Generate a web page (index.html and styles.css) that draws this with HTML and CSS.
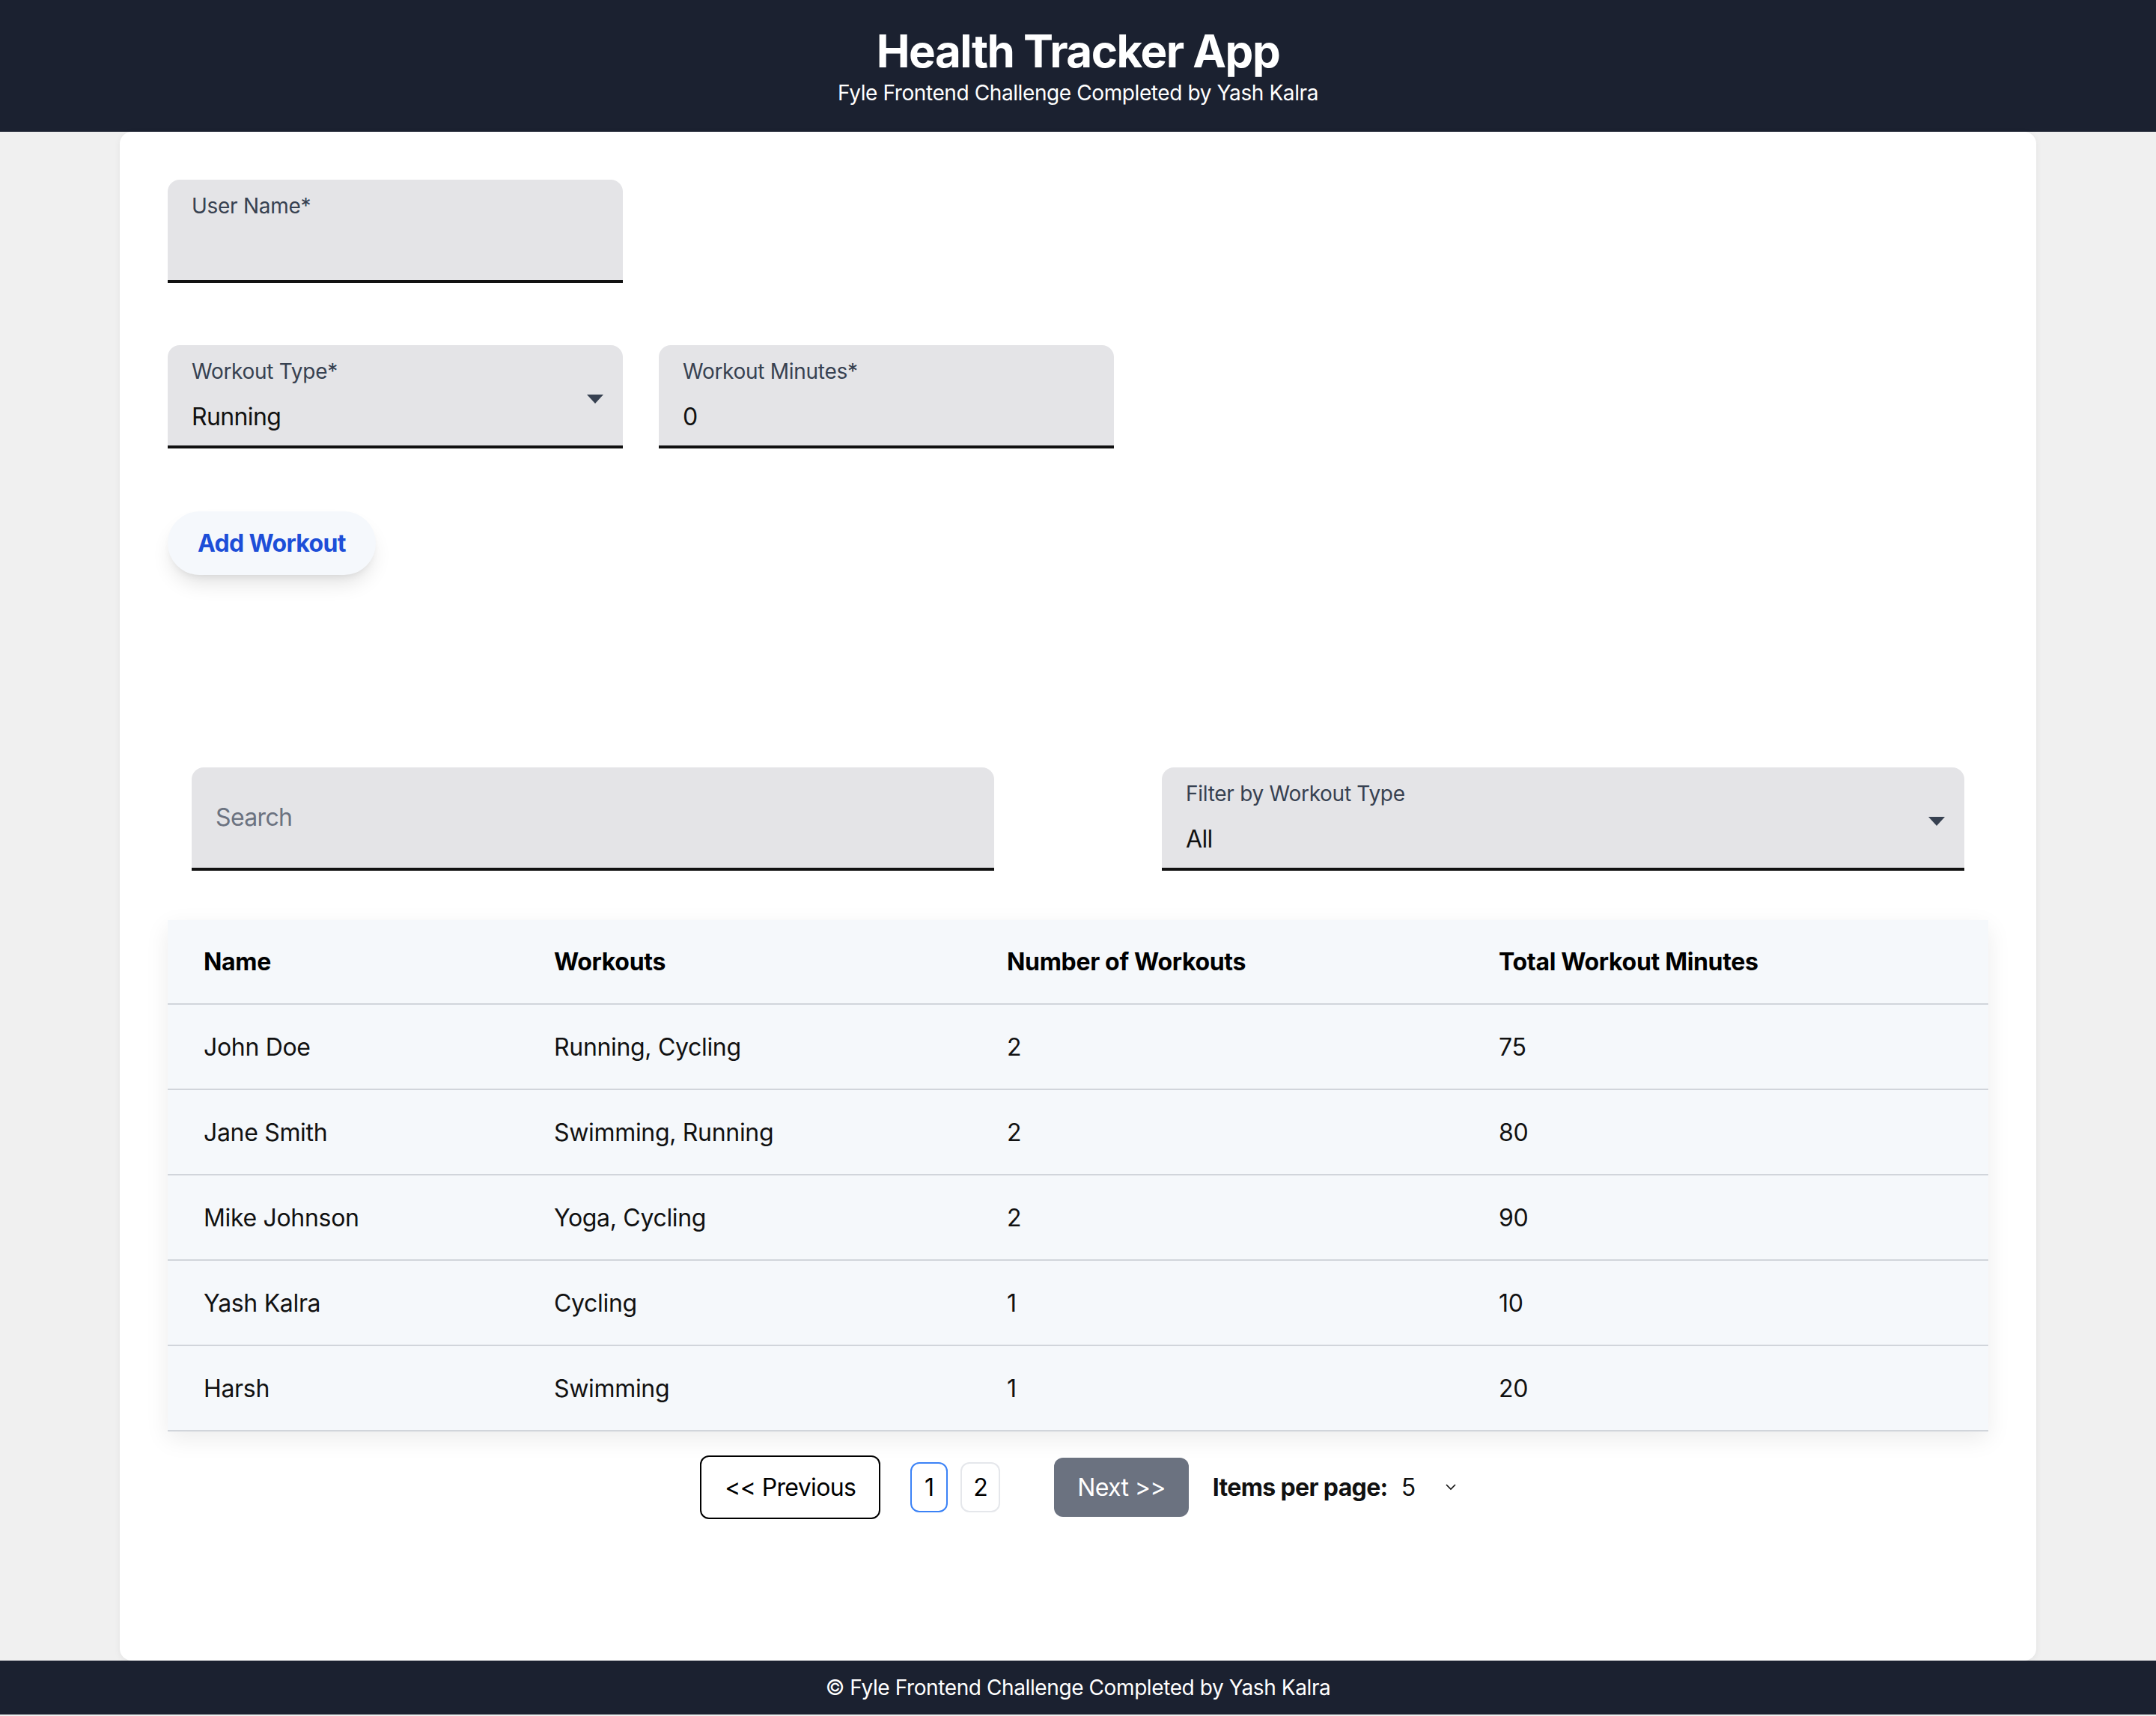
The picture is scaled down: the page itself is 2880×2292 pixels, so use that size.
FILE: index.html
```html
<!DOCTYPE html>
<html lang="en">
<head>
<meta charset="utf-8">
<title>Health Tracker App</title>
<link rel="stylesheet" href="styles.css">
</head>
<body>
<header class="app-header">
  <h1 class="app-title">Health Tracker App</h1>
  <p class="app-subtitle">Fyle Frontend Challenge Completed by Yash Kalra</p>
</header>

<main class="card">
  <form class="workout-form">
    <div class="form-row form-row-first">
      <div class="field">
        <label class="field-label">User Name*</label>
        <input class="field-input" type="text" value="">
      </div>
    </div>
    <div class="form-row">
      <div class="field field-select">
        <label class="field-label">Workout Type*</label>
        <span class="field-value">Running</span>
        <svg class="select-arrow" width="22" height="12" viewBox="0 0 22 12"><path d="M0 0 H22 L11 12 Z" fill="#374151"/></svg>
      </div>
      <div class="field">
        <label class="field-label">Workout Minutes*</label>
        <input class="field-input" type="text" value="0">
      </div>
    </div>
    <button class="add-btn" type="button">Add Workout</button>
  </form>

  <section class="filters">
    <div class="field field-search">
      <input class="search-input" type="text" placeholder="Search">
    </div>
    <div class="field field-select">
      <label class="field-label">Filter by Workout Type</label>
      <span class="field-value">All</span>
      <svg class="select-arrow" width="22" height="12" viewBox="0 0 22 12"><path d="M0 0 H22 L11 12 Z" fill="#374151"/></svg>
    </div>
  </section>

  <table class="data-table">
    <colgroup>
      <col class="col-name">
      <col class="col-workouts">
      <col class="col-count">
      <col class="col-total">
    </colgroup>
    <thead>
      <tr><th>Name</th><th>Workouts</th><th>Number of Workouts</th><th>Total Workout Minutes</th></tr>
    </thead>
    <tbody>
      <tr><td>John Doe</td><td>Running, Cycling</td><td>2</td><td>75</td></tr>
      <tr><td>Jane Smith</td><td>Swimming, Running</td><td>2</td><td>80</td></tr>
      <tr><td>Mike Johnson</td><td>Yoga, Cycling</td><td>2</td><td>90</td></tr>
      <tr><td>Yash Kalra</td><td>Cycling</td><td>1</td><td>10</td></tr>
      <tr><td>Harsh</td><td>Swimming</td><td>1</td><td>20</td></tr>
    </tbody>
  </table>

  <nav class="pagination">
    <button class="page-prev" type="button">&lt;&lt; Previous</button>
    <button class="page-num page-active" type="button">1</button>
    <button class="page-num page-second" type="button">2</button>
    <button class="page-next" type="button">Next &gt;&gt;</button>
    <span class="per-page-label">Items per page:</span>
    <span class="per-page-value">5</span>
    <svg class="per-page-chevron" width="14" height="9" viewBox="0 0 14 9"><path d="M1 1 L7 7 L13 1" fill="none" stroke="#111" stroke-width="1.6"/></svg>
  </nav>
</main>

<footer class="app-footer">© Fyle Frontend Challenge Completed by Yash Kalra</footer>
</body>
</html>
```

FILE: styles.css
```css
* { box-sizing: border-box; }

body {
  margin: 0;
  background: #f0f0f0;
  font-family: Inter, "Noto Sans", sans-serif;
  color: #111;
  letter-spacing: -0.02em;
}

.app-header {
  background: #1b2130;
  color: #fff;
  text-align: center;
  padding: 32px 0;
}

.app-title {
  margin: 0;
  font-size: 60px;
  line-height: 72px;
  font-weight: 700;
  letter-spacing: -1.5px;
}

.app-subtitle {
  margin: 0;
  font-size: 28px;
  line-height: 40px;
  letter-spacing: -0.4px;
}

.card {
  width: 2560px;
  margin: 0 auto;
  background: #fff;
  border-radius: 16px;
  box-shadow: 0 2px 10px rgba(0, 0, 0, 0.06);
  padding: 64px 64px 189px;
}

.workout-form {
  display: flex;
  flex-direction: column;
  align-items: flex-start;
}

.form-row {
  display: flex;
  gap: 48px;
  margin-bottom: 84px;
}

.form-row-first { margin-bottom: 83px; }

.field {
  position: relative;
  width: 608px;
  height: 138px;
  background: #e4e4e7;
  border-radius: 16px 16px 0 0;
  border-bottom: 4px solid #111;
  padding: 15px 32px 16px;
  display: flex;
  flex-direction: column;
}

.field-label {
  font-size: 28px;
  line-height: 40px;
  color: #374151;
  letter-spacing: -0.01em;
}

.field-input,
.field-value {
  margin-top: 19px;
  height: 44px;
  font-family: inherit;
  font-size: 32px;
  line-height: 44px;
  letter-spacing: -0.02em;
  color: #111;
  background: transparent;
  border: 0;
  padding: 0;
  outline: none;
}

.select-arrow {
  position: absolute;
  right: 26px;
  top: 66px;
}

.add-btn {
  font-family: inherit;
  font-size: 32px;
  line-height: 45px;
  font-weight: 700;
  letter-spacing: -0.02em;
  color: #1d4ed8;
  background: #f5f8fc;
  border: 0;
  border-radius: 999px;
  padding: 20px 40px;
  box-shadow: 0 16px 28px -6px rgba(0, 0, 0, 0.12), 0 6px 12px -6px rgba(0, 0, 0, 0.1);
}

.filters {
  display: grid;
  grid-template-columns: 1fr 1fr;
  column-gap: 224px;
  padding: 0 32px;
  margin-top: 257px;
  margin-bottom: 66px;
}

.filters .field { width: auto; }

.field-search {
  justify-content: center;
  padding: 0 32px;
}

.search-input {
  font-family: inherit;
  font-size: 32px;
  line-height: 44px;
  letter-spacing: -0.02em;
  border: 0;
  background: transparent;
  padding: 0;
  outline: none;
  color: #111;
}

.search-input::placeholder { color: #6b7280; }

.data-table {
  width: 100%;
  table-layout: fixed;
  border-collapse: collapse;
  background: #f5f8fb;
  box-shadow: 0 10px 30px rgba(0, 0, 0, 0.08);
}

.col-name { width: 468px; }
.col-workouts { width: 605px; }
.col-count { width: 657px; }
.col-total { width: 702px; }

.data-table tr { border-bottom: 2px solid #d1d5db; }

.data-table th {
  height: 112px;
  padding: 0 0 0 48px;
  text-align: left;
  font-size: 32px;
  font-weight: 700;
  letter-spacing: -0.01em;
  color: #000;
}

.data-table td {
  height: 114px;
  padding: 0 0 0 48px;
  font-size: 32px;
  color: #111;
}

.pagination {
  display: flex;
  align-items: center;
  justify-content: center;
  margin-top: 32px;
}

.pagination button {
  font-family: inherit;
  font-size: 32px;
  line-height: 45px;
  letter-spacing: -0.02em;
}

.page-prev {
  background: #fff;
  color: #000;
  border: 2px solid #000;
  border-radius: 12px;
  padding: 18px 31px;
}

.page-num {
  background: #fff;
  color: #000;
  border: 2px solid #e5e7eb;
  border-radius: 12px;
  padding: 9px 0;
  width: 50px;
}

.page-active {
  border-color: #3b82f6;
  margin-left: 40px;
}

.page-second {
  width: 53px;
  margin-left: 17px;
}

.page-next {
  margin-left: 72px;
  background: #6b7280;
  color: #fff;
  border: 0;
  border-radius: 12px;
  padding: 17px 31px;
}

.per-page-label {
  margin-left: 32px;
  font-size: 32px;
  font-weight: 700;
  letter-spacing: -0.02em;
}

.per-page-value {
  margin-left: 18px;
  font-size: 32px;
}

.per-page-chevron { margin-left: 40px; }

.app-footer {
  background: #1b2130;
  color: #fff;
  text-align: center;
  font-size: 28px;
  line-height: 40px;
  letter-spacing: -0.4px;
  padding: 16px 0;
}
```
